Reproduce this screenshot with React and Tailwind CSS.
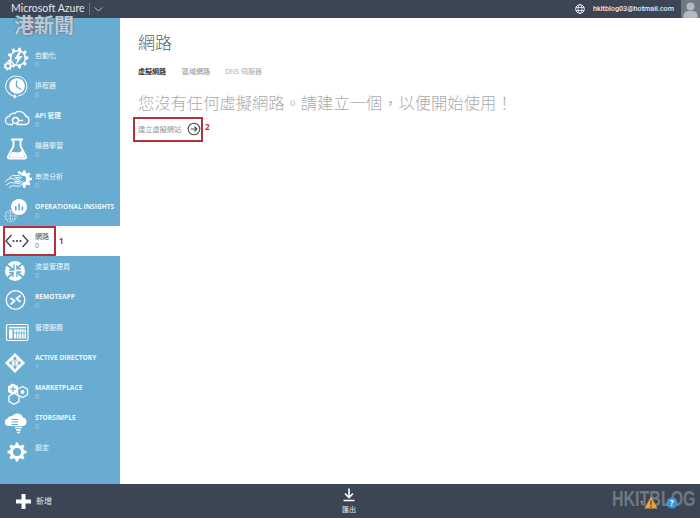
import React from "react";

const B = "#68add1";
const gearPath = (cx, cy, r, teeth = 8) => {
  const pts = [];
  const step = (Math.PI * 2) / teeth;
  for (let i = 0; i < teeth; i++) {
    const a = i * step;
    [[-0.3, 0.76], [-0.17, 1], [0.17, 1], [0.3, 0.76]].forEach(([o, k]) => {
      const t = a + o * step;
      pts.push(`${(cx + Math.cos(t) * r * k).toFixed(2)},${(cy + Math.sin(t) * r * k).toFixed(2)}`);
    });
  }
  return "M" + pts.join("L") + "Z";
};

const Svg = ({ children }) => (
  <svg viewBox="0 0 30 30" className="w-[30px] h-[30px] shrink-0">{children}</svg>
);

const icons = {
  none: <Svg />,
  auto: (
    <Svg>
      <path d={gearPath(15, 13, 10.5, 9)} fill="white" />
      <circle cx="15" cy="13" r="6.6" fill={B} />
      <path d="M17 5 L11.5 14 H14.5 L12.5 20.5 L19.5 11 H16 L19 5 Z" fill="white" />
      <path d={gearPath(5, 21, 4.5, 7)} fill="white" />
      <circle cx="5" cy="21" r="1.7" fill={B} />
    </Svg>
  ),
  clock: (
    <Svg>
      <path d="M5.5 18 A10 10 0 0 1 14 1.2 A10 10 0 0 1 23.5 14 A10 10 0 0 1 15 21" fill="none" stroke="white" strokeWidth="1" />
      <path d="M5 17 A10.5 10.5 0 0 0 12 21.5" fill="none" stroke="white" strokeWidth="1.2" />
      <path d="M11 19 L14 21.5 L11 24 Z" fill="white" />
      <circle cx="14" cy="11" r="7.8" fill="white" />
      <path d="M13.5 5.5 V11.5 L18 14.5" fill="none" stroke={B} strokeWidth="1.4" />
    </Svg>
  ),
  api: (
    <Svg>
      <path d="M10 19.5 H7 A4 4 0 0 1 6 11.5 A5 5 0 0 1 11.5 8.5 A6.5 6.5 0 0 1 22.5 11 A4.4 4.4 0 0 1 23 19.5 H13.5" fill="none" stroke="white" strokeWidth="1.3" />
      <circle cx="12.5" cy="15.5" r="3" fill="none" stroke="white" strokeWidth="1.4" />
      <path d="M15.5 15.5 H20" stroke="white" strokeWidth="1.4" />
    </Svg>
  ),
  flask: (
    <Svg>
      <path d="M8 4.5 H20 M10.5 5 V11 L5 21.5 Q4.5 23.5 6.5 23.5 H21.5 Q23.5 23.5 23 21.5 L17.5 11 V5" fill="none" stroke="white" strokeWidth="1.9" />
      <path d="M9 17 L16 17.5 L19 15.5 L22 22.5 H6 Z" fill="white" />
    </Svg>
  ),
  stream: (
    <Svg>
      <path d={gearPath(20, 13, 9, 9)} fill="white" />
      <circle cx="20" cy="13" r="3.2" fill={B} />
      <path d="M2 16 Q6 11 11 13 T19 11 M3 19 Q7 15 12 17 T20 15 M6 21.5 Q9 18.5 13 20 T19 18.5 M6 12 Q9 8.5 13 9.5 T18 8" fill="none" stroke={B} strokeWidth="2.4" />
      <path d="M2 16 Q6 11 11 13 T19 11 M3 19 Q7 15 12 17 T20 15 M6 21.5 Q9 18.5 13 20 T19 18.5 M6 12 Q9 8.5 13 9.5 T18 8" fill="none" stroke="white" strokeWidth="0.9" />
    </Svg>
  ),
  insights: (
    <Svg>
      <circle cx="7.5" cy="20" r="5.5" fill="none" stroke="white" strokeWidth="1" strokeDasharray="1.1 1.1" />
      <path d="M2 20 H13 M7.5 14.5 V25.5 M2.5 17 H12.5 M2.5 23 H12.5" stroke="white" strokeWidth="0.8" strokeDasharray="1.1 1.1" />
      <circle cx="16" cy="11" r="8" fill="white" />
      <path d="M12 10 h1.6 v4.5 H12 z M15.3 7.5 h1.6 v7 h-1.6 z M18.6 10.5 h1.6 v4 h-1.6 z" fill={B} />
    </Svg>
  ),
  network: (
    <Svg>
      <path d="M8.5 9 L3 15 L8.5 21 M19.5 9 L25 15 L19.5 21" fill="none" stroke="#3c4654" strokeWidth="1.4" />
      <circle cx="10.5" cy="15" r="1.1" fill="#3c4654" />
      <circle cx="14" cy="15" r="1.1" fill="#3c4654" />
      <circle cx="17.5" cy="15" r="1.1" fill="#3c4654" />
    </Svg>
  ),
  traffic: (
    <Svg>
      <circle cx="12" cy="15" r="10" fill="white" />
      <path d="M3.5 8.5 L10 13.5 M20 7 L14 12.5 M4 22.5 L10 17 M21 22 L14 16.5" stroke={B} strokeWidth="1.8" />
      <path d="M11 8.5 V14 H6 M14 9 V13 H18 M10 21 V16.5 H6 M14 21 V16 H18.5" fill="none" stroke={B} strokeWidth="1.4" />
    </Svg>
  ),
  remote: (
    <Svg>
      <circle cx="12.5" cy="14" r="9.3" fill="none" stroke="white" strokeWidth="1.3" />
      <path d="M7.5 12 L11.5 15 L7.5 18.5 M17.5 9.5 L13.5 12.5 L17.5 16" fill="none" stroke="white" strokeWidth="1.7" />
    </Svg>
  ),
  mgmt: (
    <Svg>
      <rect x="3.5" y="7.5" width="21.5" height="16" rx="1.5" fill="none" stroke="white" strokeWidth="1.2" />
      <path d="M6 9.8 H23 V11.3 H6 Z" fill="white" />
      <path d="M6 12.5 H9.5 V21.5 H6 Z M11 12.5 H23 V21.5 H11 Z" fill="white" />
      <path d="M13.4 13.5 V21.5 M16 13.5 V21.5 M18.6 13.5 V21.5 M21 13.5 V21.5 M11 16 H23" stroke={B} strokeWidth="0.8" />
    </Svg>
  ),
  ad: (
    <Svg>
      <path d="M12 6 L22 16 L12 26 L2 16 Z" fill="white" />
      <path d="M12 11.5 L7.5 16 L12 20.5 L16.5 16 Z M12 11.5 V20.5" fill="none" stroke={B} strokeWidth="0.9" />
      <circle cx="12" cy="11.5" r="1.4" fill={B} />
      <circle cx="7.5" cy="16" r="1.4" fill={B} />
      <circle cx="16.5" cy="16" r="1.4" fill={B} />
      <circle cx="12" cy="20.5" r="1.4" fill={B} />
    </Svg>
  ),
  market: (
    <Svg>
      <path d="M10 6.5 L15 9.3 V15 L10 17.8 L5 15 V9.3 Z" fill="white" />
      <path d="M10 9.5 V15 M7.2 12.2 H12.8" stroke={B} strokeWidth="1.2" />
      <path d="M19.5 9.5 L24.5 12.3 V17.7 L19.5 20.5 L14.5 17.7 V12.3 Z" fill="none" stroke="white" strokeWidth="1.3" />
      <circle cx="19.5" cy="15" r="2" fill="white" />
      <path d="M11 16 L16 19 V24.5 L11 27.3 L6 24.5 V19 Z" fill="none" stroke="white" strokeWidth="1.3" />
    </Svg>
  ),
  store: (
    <Svg>
      <path d="M6 19 H5.5 A3.8 3.8 0 0 1 4.5 11.6 A4.4 4.4 0 0 1 9 9 A6.4 6.4 0 0 1 20 10.5 A4.4 4.4 0 0 1 20.5 19 Z" fill="white" />
      <path d="M8.5 12.5 H15 M8.5 15 H15 M8.5 17.5 H15" stroke={B} strokeWidth="1" />
      <path d="M12 20.5 H19 M13 23 H18 M14 25.5 H17" stroke="white" strokeWidth="1.3" />
    </Svg>
  ),
  gear: (
    <Svg>
      <path d={gearPath(14, 15, 9.5, 8)} fill="white" />
      <circle cx="14" cy="15" r="4" fill={B} />
    </Svg>
  ),
};

const items = [
  { icon: "none", label: "", count: "" },
  { icon: "auto", label: "自動化", count: "0" },
  { icon: "clock", label: "排程器", count: "0" },
  { icon: "api", label: "API 管理", count: "0", bold: true },
  { icon: "flask", label: "機器學習", count: "0" },
  { icon: "stream", label: "串流分析", count: "0" },
  { icon: "insights", label: "OPERATIONAL INSIGHTS", count: "0", bold: true },
  { icon: "network", label: "網路", count: "0", active: true },
  { icon: "traffic", label: "流量管理員", count: "0" },
  { icon: "remote", label: "REMOTEAPP", count: "0", bold: true },
  { icon: "mgmt", label: "管理服務", count: "" },
  { icon: "ad", label: "ACTIVE DIRECTORY", count: "1", bold: true },
  { icon: "market", label: "MARKETPLACE", count: "0", bold: true },
  { icon: "store", label: "STORSIMPLE", count: "0", bold: true },
  { icon: "gear", label: "設定", count: "" },
];

const font = "font-['Open_Sans','Noto_Sans_CJK_TC',sans-serif]";

function Row({ it }) {
  return (
    <div className={`h-[30.2px] flex items-center pl-[3px] gap-[2px] ${it.active ? "bg-white" : ""}`}>
      {icons[it.icon]}
      <div className="flex flex-col leading-[9px] whitespace-nowrap">
        <span className={`${it.bold ? "font-bold text-[6.6px]" : "text-[7px]"} ${it.active ? "text-[#444c58]" : "text-[#eef6fa]"}`}>{it.label || "\u00a0"}</span>
        <span className={`text-[7px] ${it.active ? "text-[#777]" : "text-[#a6d0e6]"}`}>{it.count || "\u00a0"}</span>
      </div>
    </div>
  );
}

export default function App() {
  return (
    <div className={`relative w-[700px] h-[518px] flex flex-col overflow-hidden bg-white ${font}`}>
      <header className="h-[18px] shrink-0 bg-[#3b4554] flex items-center text-white">
        <span className="ml-[11px] text-[10.5px] text-[#e4e7ea] font-['Lato',sans-serif] w-[78px] whitespace-nowrap">Microsoft Azure</span>
        <span className="w-px h-[12px] bg-[#67707c]" />
        <svg viewBox="0 0 10 6" className="w-[9px] h-[5px] ml-[4px]"><path d="M0.5 0.5 L5 5 L9.5 0.5" fill="none" stroke="#d5d8dc" strokeWidth="1" /></svg>
        <div className="flex-1" />
        <svg viewBox="0 0 12 12" className="w-[10px] h-[10px]">
          <circle cx="6" cy="6" r="5.2" fill="none" stroke="white" strokeWidth="1" />
          <ellipse cx="6" cy="6" rx="2.4" ry="5.2" fill="none" stroke="white" strokeWidth="0.9" />
          <path d="M1 4.2 H11 M1 7.8 H11" stroke="white" strokeWidth="0.9" />
        </svg>
        <span className="ml-[8px] text-[7.2px] font-medium text-[#e8eaed] font-['Roboto',sans-serif] w-[88px] whitespace-nowrap">hkitblog03@hotmail.com</span>
        <div className="w-[19px] h-[18px] bg-[#6f7984] overflow-hidden">
          <svg viewBox="0 0 19 18" className="w-[19px] h-[18px]">
            <circle cx="9.5" cy="6.5" r="4" fill="#b4b9bf" />
            <path d="M2.5 18 V15 Q3 11.5 7 11 H12 Q16 11.5 16.5 15 V18 Z" fill="#b4b9bf" />
          </svg>
        </div>
      </header>

      <div className="flex flex-1 min-h-0">
        <aside className="w-[120px] shrink-0 bg-[#68add1] overflow-hidden">
          <div className="-mt-[3.4px]">
            {items.map((it) => <Row key={it.icon} it={it} />)}
          </div>
        </aside>
        <main className="flex-1 pl-[18px] pt-[14px]">
          <h1 className="text-[17px] leading-[22px] text-[#585f69] font-light">網路</h1>
          <nav className="mt-[13px] flex text-[7px] leading-[10px] whitespace-nowrap">
            <span className="w-[44px] font-bold text-[#333]">虛擬網路</span>
            <span className="w-[43px] text-[#8d8d8d]">區域網路</span>
            <span className="text-[#a8a8a8]">DNS 伺服器</span>
          </nav>
          <h2 className="mt-[14px] text-[16.3px] leading-[24px] text-[#aaaaaa] font-light whitespace-nowrap">{"您沒有任何虛擬網路。請建立一個\uFF0C以便開始使用\uFF01"}</h2>
          <div className="mt-[7px] flex items-center h-[14px]">
            <span className="w-[49px] text-[7.2px] text-[#959595] whitespace-nowrap">建立虛擬網站</span>
            <svg viewBox="0 0 14 14" className="w-[14px] h-[14px]">
              <circle cx="7" cy="7" r="5.8" fill="none" stroke="#4a4a4a" strokeWidth="1.1" />
              <path d="M3.8 7 H9.8 M7.4 4.6 L9.9 7 L7.4 9.4" fill="none" stroke="#4a4a4a" strokeWidth="1.2" />
            </svg>
          </div>
        </main>
      </div>

      <footer className="relative h-[34px] shrink-0 bg-[#3b4554] flex items-center pl-[16px] text-white">
        <svg viewBox="0 0 15 15" className="w-[15px] h-[15px]"><path d="M5.5 0 H9.5 V5.5 H15 V9.5 H9.5 V15 H5.5 V9.5 H0 V5.5 H5.5 Z" fill="white" /></svg>
        <span className="ml-[5px] text-[8px] text-[#e6e8ea]">新增</span>
        <div className="absolute left-[337px] top-[4px] w-[24px] flex flex-col items-center">
          <svg viewBox="0 0 12 14" className="w-[12px] h-[14px]"><path d="M6 0.5 V9 M2 5.5 L6 9.5 L10 5.5 M0.5 12.5 H11.5" fill="none" stroke="white" strokeWidth="1.6" /></svg>
          <span className="mt-[3px] text-[7px] leading-[9px] text-[#e6e8ea]">匯出</span>
        </div>
      </footer>

      {/* watermarks and annotations lying over the page */}
      <div className="absolute left-[26px] top-[18px] w-[9px] h-[15px] bg-[#a8505a]/50" />
      <div className="absolute left-[14px] top-[13px] text-[20px] leading-[24px] font-bold text-[#cdd8e2]/90 font-['Noto_Sans_CJK_TC',sans-serif] [text-shadow:0_0_2px_#4a5866] whitespace-nowrap">港新聞</div>
      <div className="absolute left-[612px] top-[487px] text-[16px] leading-[24px] font-bold text-[#6f7884] font-['Liberation_Sans',sans-serif] scale-y-[1.35] origin-center whitespace-nowrap">HKITBLOG</div>
      <span className="absolute left-[640px] top-[499px] text-[6px] leading-[8px] text-white">1</span>
      <svg viewBox="0 0 14 13" className="absolute left-[644px] top-[496px] w-[14px] h-[13px]">
        <path d="M7 0.5 L13.5 12.5 H0.5 Z" fill="#eea23d" />
        <path d="M7 4.5 V9 M7 10 V11.5" stroke="#4b3a1d" strokeWidth="1.2" />
      </svg>
      <svg viewBox="0 0 12 12" className="absolute left-[666px] top-[497px] w-[12px] h-[12px]">
        <circle cx="6" cy="6" r="5.5" fill="#3d93d6" />
      </svg>
      <span className="absolute left-[670px] top-[497px] text-[8px] leading-[12px] font-bold text-white">?</span>

      <div className="absolute left-[3px] top-[226px] w-[53px] h-[30px] border-2 border-[#b5303a]" />
      <span className="absolute left-[59px] top-[236px] text-[8px] leading-[10px] font-bold text-[#b5303a]">1</span>
      <div className="absolute left-[133px] top-[117px] w-[70px] h-[25px] border-2 border-[#b5303a]" />
      <span className="absolute left-[205px] top-[122px] text-[8px] leading-[10px] font-bold text-[#b5303a]">2</span>
    </div>
  );
}
